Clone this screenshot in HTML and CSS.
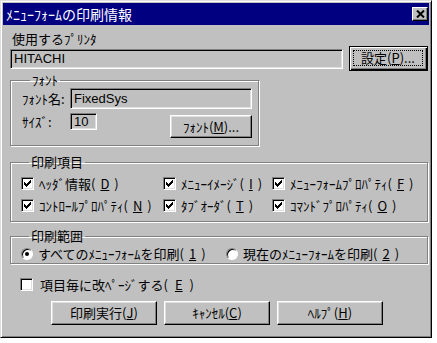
FILE: index.html
```html
<!DOCTYPE html>
<html lang="ja">

<head>
    <meta charset="UTF-8">
    <title>ﾒﾆｭｰﾌｫｰﾑの印刷情報</title>
    <link rel="stylesheet" href="styles.css">
</head>

<body>
    <div class="window">
        <div class="titlebar">
            <span class="title">ﾒﾆｭｰﾌｫｰﾑの印刷情報</span>
            <span class="close">
                <svg width="9" height="8" viewBox="0 0 9 8">
                    <path d="M1 0.5 L8 7.5 M8 0.5 L1 7.5" stroke="#000" stroke-width="2" fill="none" />
                </svg>
            </span>
        </div>

        <div class="client">
            <div class="label">使用するﾌﾟﾘﾝﾀ</div>
            <div class="printer-row">
                <div class="field printer">HITACHI</div>
                <button class="btn default"><span class="focus">設定(<u>P</u>)...</span></button>
            </div>

            <fieldset class="group font-group">
                <legend>ﾌｫﾝﾄ</legend>
                <div class="font-row">
                    <span class="caption">ﾌｫﾝﾄ名:</span>
                    <div class="field font-name">FixedSys</div>
                </div>
                <div class="size-row">
                    <span class="caption">ｻｲｽﾞ:</span>
                    <div class="field size">10</div>
                    <button class="btn font-btn">ﾌｫﾝﾄ(<u>M</u>)...</button>
                </div>
            </fieldset>

            <fieldset class="group items">
                <legend>印刷項目</legend>
                <div class="check-grid">
                    <label class="check"><span class="box on"></span>ﾍｯﾀﾞ情報(<u>D</u>)</label>
                    <label class="check"><span class="box on"></span>ﾒﾆｭｰｲﾒｰｼﾞ(<u>I</u>)</label>
                    <label class="check"><span class="box on"></span>ﾒﾆｭｰﾌｫｰﾑﾌﾟﾛﾊﾟﾃｨ(<u>F</u>)</label>
                    <label class="check"><span class="box on"></span>ｺﾝﾄﾛｰﾙﾌﾟﾛﾊﾟﾃｨ(<u>N</u>)</label>
                    <label class="check"><span class="box on"></span>ﾀﾌﾞｵｰﾀﾞ(<u>T</u>)</label>
                    <label class="check"><span class="box on"></span>ｺﾏﾝﾄﾞﾌﾟﾛﾊﾟﾃｨ(<u>O</u>)</label>
                </div>
            </fieldset>

            <fieldset class="group range">
                <legend>印刷範囲</legend>
                <div class="radio-row">
                    <label class="radio"><span class="circle"><i class="dot"></i></span>すべてのﾒﾆｭｰﾌｫｰﾑを印刷(<u>1</u>)</label>
                    <label class="radio"><span class="circle"></span>現在のﾒﾆｭｰﾌｫｰﾑを印刷(<u>2</u>)</label>
                </div>
            </fieldset>

            <label class="check page-break"><span class="box"></span>項目毎に改ﾍﾟｰｼﾞする(<u>E</u>)</label>

            <div class="buttons">
                <button class="btn">印刷実行(<u>J</u>)</button>
                <button class="btn">ｷｬﾝｾﾙ(<u>C</u>)</button>
                <button class="btn">ﾍﾙﾌﾟ(<u>H</u>)</button>
            </div>
        </div>
    </div>

    <script>
        // draw the win95 style check mark into every ticked box
        var check = '<svg width="7" height="7" viewBox="0 0 7 7" shape-rendering="crispEdges">' +
            '<path d="M6 0h1v1h-1zM5 1h2v1h-2zM0 2h1v1h-1zM4 2h3v1h-3zM0 3h2v1h-2zM3 3h3v1h-3zM0 4h5v1h-5zM1 5h3v1h-3zM2 6h1v1h-1z" fill="#000"/></svg>';
        document.querySelectorAll('.box.on').forEach(function (b) {
            b.innerHTML = check;
        });
    </script>
</body>

</html>
```

FILE: styles.css
```css
* {
    box-sizing: border-box;
}

html,
body {
    margin: 0;
    padding: 0;
    background-color: #fff;
    color: #000;
    font-family: "Noto Sans CJK JP", sans-serif;
    font-size: 13px;
}

.window {
    width: 432px;
    height: 338px;
    background-color: #c0c0c0;
    border: 1px solid;
    border-color: #dfdfdf #000 #000 #dfdfdf;
    box-shadow: inset 1px 1px #fff, inset -1px -1px #808080;
    padding: 2px;
    display: flex;
    flex-direction: column;
}

.titlebar {
    height: 22px;
    background-color: #000080;
    color: #fff;
    display: flex;
    align-items: center;
    justify-content: space-between;
    padding: 0 1px 0 3px;
}

.title {
    line-height: 16px;
    font-size: 14px;
}

.close {
    width: 16px;
    height: 14px;
    background-color: #c0c0c0;
    border: 1px solid;
    border-color: #fff #000 #000 #fff;
    box-shadow: inset -1px -1px #808080;
    display: flex;
    align-items: center;
    justify-content: center;
}

.client {
    padding: 6px 1px 0 7px;
    display: flex;
    flex-direction: column;
}

.label {
    line-height: 15px;
    padding-left: 2px;
}

/* sunken edit box */
.field {
    border: 1px solid;
    border-color: #808080 #fff #fff #808080;
    box-shadow: inset 1px 1px #000, inset -1px -1px #dfdfdf;
    background-color: #c0c0c0;
    padding: 0 3px;
    font-family: "Liberation Sans", sans-serif;
    font-size: 13px;
    display: flex;
    align-items: center;
}

.btn {
    font: inherit;
    color: #000;
    background-color: #c0c0c0;
    border: 1px solid;
    border-color: #fff #000 #000 #fff;
    box-shadow: inset -1px -1px #808080, inset 1px 1px #dfdfdf;
    padding: 0;
    display: flex;
    align-items: center;
    justify-content: center;
    line-height: 16px;
}

.btn.default {
    border-color: #000;
    box-shadow: inset 1px 1px #fff, inset -1px -1px #000, inset -2px -2px #808080;
    align-items: stretch;
}

.btn .focus {
    flex: 1;
    margin: 3px 4px 4px 3px;
    border: 1px dotted #000;
    display: flex;
    align-items: center;
    justify-content: center;
}

.printer-row {
    height: 25px;
    display: flex;
    align-items: center;
    gap: 6px;
}

.printer-row .printer {
    flex: 1;
    height: 20px;
}

.printer-row .default {
    width: 79px;
    height: 25px;
}

/* group boxes */
.group {
    margin: 0;
    border: 1px solid #808080;
    box-shadow: inset 1px 1px #fff, 1px 1px #fff;
    padding: 0;
}

.group legend {
    padding: 0 2px;
    margin-left: 8px;
    line-height: 16px;
}

.font-group {
    width: 249px;
    margin-top: 1px;
    padding: 0 6px 7px 11px;
}

.font-row,
.size-row {
    display: flex;
    align-items: center;
}

.caption {
    width: 48px;
}

.font-row .font-name {
    width: 182px;
    height: 21px;
}

.size-row {
    margin-top: 4px;
    align-items: flex-start;
}

.size-row .size {
    width: 27px;
    height: 17px;
}

.size-row .caption {
    line-height: 17px;
}

.size-row .font-btn {
    width: 82px;
    height: 23px;
    margin: 2px 0 0 73px;
}

.items {
    margin-top: 8px;
    padding: 2px 4px 5px 10px;
}

.check-grid {
    display: grid;
    grid-template-columns: 142px 109px 1fr;
    grid-auto-rows: 22px;
}

.check {
    display: flex;
    align-items: center;
    gap: 5px;
    white-space: nowrap;
}

.box {
    width: 13px;
    height: 13px;
    flex: none;
    background-color: #fff;
    border: 1px solid;
    border-color: #808080 #fff #fff #808080;
    box-shadow: inset 1px 1px #000, inset -1px -1px #dfdfdf;
    display: flex;
    align-items: center;
    justify-content: center;
}

.range {
    margin-top: 6px;
    padding: 0 4px 3px 10px;
}

.radio-row {
    display: grid;
    grid-template-columns: 205px 1fr;
    height: 16px;
}

.radio {
    display: flex;
    align-items: center;
    gap: 5px;
    white-space: nowrap;
}

.circle {
    width: 12px;
    height: 12px;
    flex: none;
    border-radius: 50%;
    background-color: #fff;
    border: 1px solid;
    border-color: #808080 #fff #fff #808080;
    box-shadow: inset 1px 1px #000;
    display: flex;
    align-items: center;
    justify-content: center;
}

.circle .dot {
    width: 4px;
    height: 4px;
    border-radius: 50%;
    background-color: #000;
}

.page-break {
    margin-top: 11px;
    height: 18px;
    padding-left: 10px;
    gap: 7px;
}

.buttons {
    margin-top: 8px;
    padding-left: 41px;
    display: flex;
    gap: 7px;
}

.buttons .btn {
    width: 106px;
    height: 24px;
}
```
